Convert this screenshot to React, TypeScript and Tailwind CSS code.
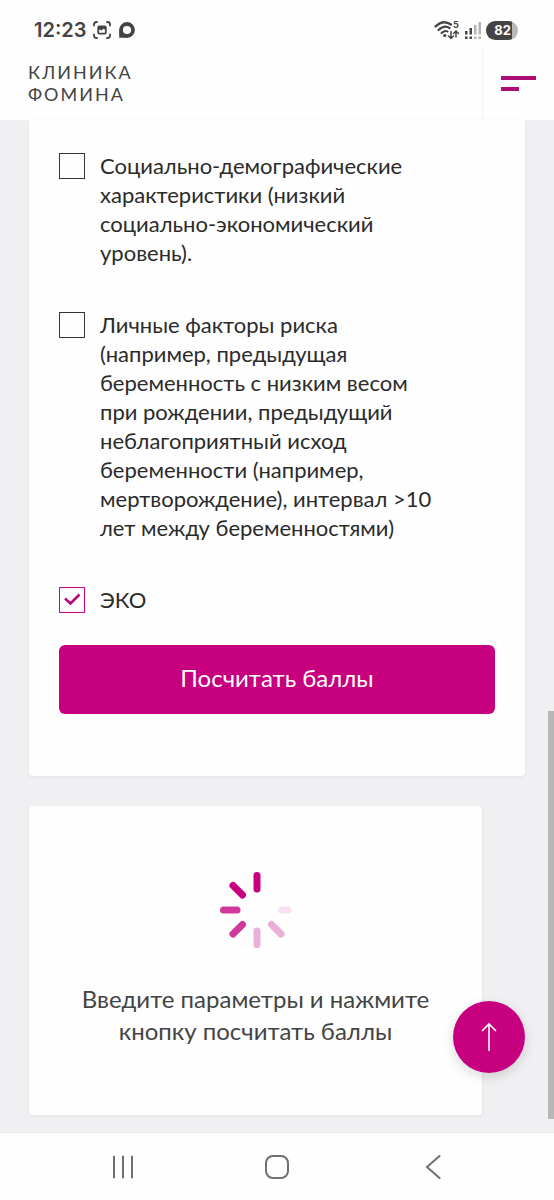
import { useState } from "react"

type RiskFactor = {
  id: string
  label: string
}

const riskFactors: RiskFactor[] = [
  {
    id: "social",
    label: "Социально-демографические характеристики (низкий социально-экономический уровень).",
  },
  {
    id: "personal",
    label:
      "Личные факторы риска (например, предыдущая беременность с низким весом при рождении, предыдущий неблагоприятный исход беременности (например, мертворождение), интервал >10 лет между беременностями)",
  },
  { id: "ivf", label: "ЭКО" },
]

function StatusBar() {
  return (
    <div className="flex h-12 items-center pt-3 pr-9 pl-[34px] text-[#444]">
      <span className="font-[Inter,sans-serif] text-xl leading-6 font-semibold">12:23</span>

      {/* Screen capture */}
      <svg className="ml-[6px] h-5 w-5" viewBox="0 0 20 20" fill="none" stroke="currentColor" strokeWidth="1.800" strokeLinecap="round">
        <path d="M2 5.500V4.500Q2 2 4.500 2H5M15 2H15.500Q18 2 18 4.500V5.500M18 14.500V15.500Q18 18 15.500 18H15M5 18H4.500Q2 18 2 15.500V14.500" />
        <rect x="6.200" y="6.400" width="7.600" height="7.200" rx="1" />
        <path d="M6 6H14V10L11.500 8.800L9.500 10.500L8 9.500L6 10.500Z" fill="currentColor" stroke="none" />
      </svg>

      {/* Chat bubble */}
      <svg className="ml-1 h-5 w-5" viewBox="0 0 20 20" fill="none" stroke="currentColor">
        <circle cx="11" cy="10" r="6" strokeWidth="3.800" />
        <path d="M3.200 10V17.800H10L6 14Z" fill="currentColor" stroke="none" />
      </svg>

      {/* Wi-Fi */}
      <svg className="ml-auto h-5 w-[26px] overflow-visible" viewBox="0 0 26 20" fill="none" stroke="currentColor" strokeLinecap="round">
        <path d="M1.500 6.500Q9 -1 17 4.500" strokeWidth="2.400" />
        <path d="M4.500 10Q10.500 4.500 15.500 8" strokeWidth="2.200" />
        <path d="M7.500 13Q11 10 13.500 11.500" strokeWidth="2" />
        <circle cx="10.800" cy="15.500" r="1.600" fill="currentColor" stroke="none" />
        <path d="M17 11.500V18.500M14.500 16L17 18.500L19.500 16M22 17V11M19.500 13.500L22 11L24.500 13.500" strokeWidth="1.500" />
        <text x="19" y="8" fill="currentColor" stroke="none" className="font-[Inter,sans-serif] text-[9px] font-bold">
          5
        </text>
      </svg>

      {/* Signal strength */}
      <svg className="ml-1 h-5 w-[18px]" viewBox="0 0 18 20" fill="currentColor">
        <path d="M1 11H3.500V14.500H1ZM5.500 8H8V14.500H5.500ZM1 16.500H3.500V19H1ZM5.500 16.500H8V19H5.500Z" />
        <path d="M10 5H12.500V14.500H10ZM14.500 2H17V14.500H14.500ZM10 16.500H12.500V19H10ZM14.500 16.500H17V19H14.500Z" opacity=".4" />
      </svg>

      <span className="ml-1 flex h-[19px] w-8 items-center overflow-hidden rounded-full bg-[#b8b8b8]">
        <span className="flex h-full w-[26px] items-center justify-end bg-[#444] pr-px font-[Inter,sans-serif] text-[13px] leading-4 font-bold text-white">
          82
        </span>
      </span>
    </div>
  )
}

function Header() {
  return (
    <header className="flex h-[72px] items-stretch justify-between">
      <a href="#" className="pt-[13px] pl-7 font-[Lato,sans-serif] text-lg leading-[22px] tracking-[2px] text-[#444]">
        КЛИНИКА
        <br />
        ФОМИНА
      </a>
      <button type="button" aria-label="Меню" className="flex w-[72px] flex-col gap-[7px] border-l border-[#f4f4f4] pt-7 pl-[18px]">
        <span className="h-1 w-[35px] bg-[#ad0d75]" />
        <span className="h-1 w-[18px] bg-[#ad0d75]" />
      </button>
    </header>
  )
}

function Spinner() {
  return (
    <svg className="h-20 w-20" viewBox="0 0 80 80" fill="none" strokeWidth="7" strokeLinecap="round">
      <path d="M41 6.500V20" stroke="#c6007e" />
      <path d="M17 16.500L26.500 26" stroke="#c6007e" />
      <path d="M7.500 41H21" stroke="#d0389b" />
      <path d="M26.500 55.500L17 65" stroke="#d0389b" />
      <path d="M41 62V75.500" stroke="#ebb0d8" />
      <path d="M55.500 55.500L65 65" stroke="#ebb0d8" />
      <path d="M65.500 41H72" stroke="#f8e1f1" />
    </svg>
  )
}

function NavigationBar() {
  return (
    <nav className="grid h-[68px] grid-cols-[1fr_64px_1fr] items-center border-t border-[#e8e8e8] bg-[#fefefe] text-[#707070]">
      <button type="button" aria-label="Недавние" className="justify-self-center">
        <svg className="h-6 w-6" viewBox="0 0 24 24" stroke="currentColor" strokeWidth="2" strokeLinecap="round">
          <path d="M3 1.500V22.500M12 1.500V22.500M21 1.500V22.500" />
        </svg>
      </button>
      <button type="button" aria-label="Домой" className="justify-self-center">
        <svg className="h-6 w-6" viewBox="0 0 24 24" fill="none" stroke="currentColor" strokeWidth="2">
          <rect x="1" y="1" width="22" height="22" rx="7" />
        </svg>
      </button>
      <button type="button" aria-label="Назад" className="justify-self-center">
        <svg className="h-6 w-6" viewBox="0 0 24 24" fill="none" stroke="currentColor" strokeWidth="2" strokeLinecap="round" strokeLinejoin="round">
          <path d="M19.500 1L7 12L19.500 23" />
        </svg>
      </button>
    </nav>
  )
}

export default function App() {
  const [selected, setSelected] = useState<string[]>(["ivf"])

  const toggle = (id: string) => {
    setSelected((prev) => (prev.includes(id) ? prev.filter((item) => item !== id) : [...prev, id]))
  }

  return (
    <div className="flex min-h-screen flex-col bg-[#fefefe] font-[Lato,'Noto_Sans',sans-serif]">
      <StatusBar />
      <Header />

      <main className="relative flex-1 bg-[#f0f0f2] px-[29px] pb-[17px]">
        <form
          className="rounded-b bg-[#fefefe] px-[30px] pt-[31px] pb-[62px] shadow-[0_1px_4px_rgba(0,0,0,0.06)]"
          onSubmit={(e) => e.preventDefault()}
        >
          <div className="flex flex-col gap-[43px]">
            {riskFactors.map((factor) => (
              <label key={factor.id} className="flex items-start text-[#2b2b2b]">
                <span className="mt-[2px] grid shrink-0">
                  <input
                    type="checkbox"
                    checked={selected.includes(factor.id)}
                    onChange={() => toggle(factor.id)}
                    className="peer col-start-1 row-start-1 h-[26px] w-[26px] appearance-none border border-[#333] checked:border-[#c6007e]"
                  />
                  <svg
                    className="pointer-events-none invisible col-start-1 row-start-1 h-[26px] w-[26px] text-[#b5077a] peer-checked:visible"
                    viewBox="0 0 26 26"
                    fill="none"
                    stroke="currentColor"
                    strokeWidth="2.500"
                  >
                    <path d="M6 11.500L11.500 16.500L20.500 7.500" />
                  </svg>
                </span>
                <span className="ml-[15px] max-w-[332px] text-[22px] leading-[29px]">{factor.label}</span>
              </label>
            ))}
          </div>
          <button type="submit" className="mt-[31px] h-[69px] w-full rounded-md bg-[#c6007e] pb-1 text-2xl text-white">
            Посчитать баллы
          </button>
        </form>

        <section className="mt-[30px] mr-[43px] flex flex-col items-center rounded bg-[#fefefe] px-8 pt-[63px] pb-[68px] text-[#444] shadow-[0_1px_4px_rgba(0,0,0,0.06)]">
          <Spinner />
          <p className="mt-[34px] text-center text-2xl leading-8">
            Введите параметры и нажмите
            <br />
            кнопку посчитать баллы
          </p>
        </section>

        {/* Back to top */}
        <button
          type="button"
          aria-label="Наверх"
          className="absolute right-[29px] bottom-[59px] flex h-[72px] w-[72px] items-center justify-center rounded-full bg-[#c6007e] text-white shadow-[0_4px_12px_rgba(0,0,0,0.14)]"
        >
          <svg className="h-8 w-8" viewBox="0 0 32 32" fill="none" stroke="currentColor" strokeWidth="1.600">
            <path d="M16 30V3M9 10L16 3L23 10" />
          </svg>
        </button>

        {/* Scroll thumb */}
        <div className="absolute right-0 bottom-[13px] h-[408px] w-[6px] bg-[#b7b7b8]" />
      </main>

      <NavigationBar />
    </div>
  )
}
